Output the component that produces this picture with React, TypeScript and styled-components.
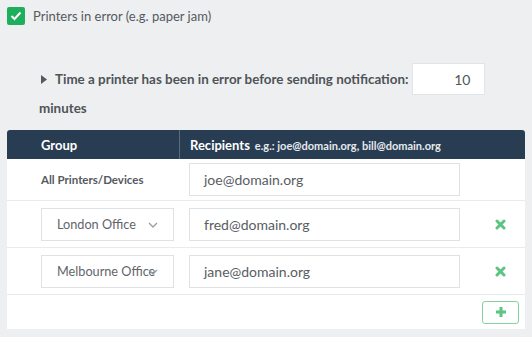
import React from "react";
import styled, { createGlobalStyle } from "styled-components";

const GlobalStyle = createGlobalStyle`
  html, body {
    margin: 0;
    padding: 0;
    background: #eeeff1;
  }
  body {
    font-family: Lato, "Open Sans", Arial, sans-serif;
    color: #555a60;
    width: 532px;
    height: 337px;
    overflow: hidden;
  }
`;

const Page = styled.div`
  padding: 6px 7px 0 7px;
`;

const CheckRow = styled.label`
  display: flex;
  align-items: center;
  gap: 8px;
  font-size: 13px;
  height: 19px;
`;

const CheckBox = styled.span`
  width: 18px;
  height: 18px;
  border-radius: 2px;
  background: #1fae5b;
  display: flex;
  align-items: center;
  justify-content: center;
`;

const DelayBlock = styled.div`
  padding: 38px 0 0 32px;
`;

const DelayLine = styled.div`
  display: flex;
  align-items: center;
  gap: 2px;
`;

const Caret = styled.span`
  width: 14px;
  display: flex;
  align-items: center;
  padding-left: 2px;
`;

const BoldLabel = styled.span`
  font-size: 13.4px;
  font-weight: 700;
  color: #4f5458;
  margin-left: -2px;
`;

const NumberBox = styled.div`
  width: 73px;
  height: 32px;
  box-sizing: border-box;
  background: #fff;
  border: 1px solid #e2e4e7;
  display: flex;
  align-items: center;
  justify-content: flex-end;
  padding-right: 14px;
  font-size: 14px;
  color: #555;
  margin-left: 2px;
`;

const Minutes = styled.div`
  font-size: 13.4px;
  font-weight: 700;
  color: #4f5458;
  line-height: 26px;
`;

const Table = styled.div`
  margin-top: 9px;
  background: #fff;
  border-radius: 3px 3px 0 0;
  overflow: hidden;
  width: 518px;
`;

const Grid = styled.div`
  display: grid;
  grid-template-columns: 172px 298px 48px;
`;

const HeadRow = styled(Grid)`
  background: #283d52;
  height: 29px;
  color: #fff;
`;

const HeadCell = styled.div<{ $divider?: boolean }>`
  display: flex;
  align-items: center;
  padding-left: ${(p) => (p.$divider ? "10px" : "34px")};
  border-left: ${(p) => (p.$divider ? "1px solid #5a6b7c" : "none")};
  font-size: 13px;
  font-weight: 700;
  gap: 5px;
`;

const Hint = styled.span`
  font-size: 11px;
  font-weight: 700;
  color: #e6eaee;
  padding-top: 2px;
`;

const BodyRow = styled(Grid)<{ $h: number }>`
  height: ${(p) => p.$h}px;
  border-bottom: 1px solid #e8eaec;
  box-sizing: border-box;
  align-items: center;
`;

const GroupName = styled.div`
  padding-left: 34px;
  font-size: 11.5px;
  font-weight: 700;
  color: #555a60;
`;

const GroupCell = styled.div`
  padding-left: 34px;
`;

const Select = styled.div`
  position: relative;
  width: 133px;
  height: 33px;
  box-sizing: border-box;
  border: 1px solid #dfe2e5;
  display: flex;
  align-items: center;
  padding-left: 15px;
  font-size: 12.7px;
  color: #61666b;
  white-space: nowrap;
`;

const Chevron = styled.span`
  position: absolute;
  right: 15px;
  top: 13px;
  display: flex;
  z-index: 1;
`;

const RecipientCell = styled.div`
  padding-left: 10px;
`;

const EmailInput = styled.div`
  width: 271px;
  height: 33px;
  box-sizing: border-box;
  border: 1px solid #dfe2e5;
  display: flex;
  align-items: center;
  padding-left: 14px;
  font-size: 14px;
  color: #585d62;
`;

const ActionCell = styled.div`
  display: flex;
  justify-content: center;
  padding-right: 2px;
`;

const Footer = styled.div`
  height: 34px;
  display: flex;
  align-items: center;
  justify-content: flex-end;
  padding-right: 6px;
`;

const AddButton = styled.button`
  width: 37px;
  height: 23px;
  border: 1px solid #86d29e;
  border-radius: 3px;
  background: #fff;
  display: flex;
  align-items: center;
  justify-content: center;
  padding: 0;
`;

const Remove = () => (
  <svg width="11" height="11" viewBox="0 0 11 11">
    <path d="M2 2 L9 9 M9 2 L2 9" stroke="#5bc480" strokeWidth="3" strokeLinecap="round" />
  </svg>
);

const rows = [
  { group: "London Office", email: "fred@domain.org" },
  { group: "Melbourne Office", email: "jane@domain.org" },
];

export default function App() {
  return (
    <>
      <GlobalStyle />
      <Page>
        <CheckRow>
          <CheckBox>
            <svg width="12" height="10" viewBox="0 0 12 10">
              <path d="M1.5 5 L4.5 8 L10.5 1.5" stroke="#fff" strokeWidth="2" fill="none" />
            </svg>
          </CheckBox>
          Printers in error (e.g. paper jam)
        </CheckRow>
        <DelayBlock>
          <DelayLine>
            <Caret>
              <svg width="6" height="9" viewBox="0 0 6 9">
                <path d="M0 0 L6 4.5 L0 9 Z" fill="#555a60" />
              </svg>
            </Caret>
            <BoldLabel>Time a printer has been in error before sending notification:</BoldLabel>
            <NumberBox>10</NumberBox>
          </DelayLine>
          <Minutes>minutes</Minutes>
        </DelayBlock>
        <Table>
          <HeadRow>
            <HeadCell>Group</HeadCell>
            <HeadCell $divider>
              Recipients <Hint>e.g.: joe@domain.org, bill@domain.org</Hint>
            </HeadCell>
            <div />
          </HeadRow>
          <BodyRow $h={42}>
            <GroupName>All Printers/Devices</GroupName>
            <RecipientCell>
              <EmailInput>joe@domain.org</EmailInput>
            </RecipientCell>
            <div />
          </BodyRow>
          {rows.map((r) => (
            <BodyRow $h={47} key={r.group}>
              <GroupCell>
                <Select>
                  {r.group}
                  <Chevron>
                    <svg width="10" height="6" viewBox="0 0 10 6">
                      <path d="M1 1 L5 5 L9 1" stroke="#9a9ea3" strokeWidth="1.3" fill="none" />
                    </svg>
                  </Chevron>
                </Select>
              </GroupCell>
              <RecipientCell>
                <EmailInput>{r.email}</EmailInput>
              </RecipientCell>
              <ActionCell>
                <Remove />
              </ActionCell>
            </BodyRow>
          ))}
          <Footer>
            <AddButton>
              <svg width="12" height="12" viewBox="0 0 12 12">
                <path d="M6 1 V11 M1 6 H11" stroke="#5bc480" strokeWidth="3" />
              </svg>
            </AddButton>
          </Footer>
        </Table>
      </Page>
    </>
  );
}
